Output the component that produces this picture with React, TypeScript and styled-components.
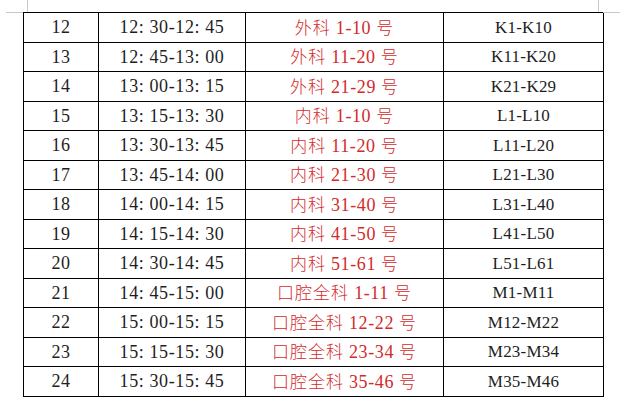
import React from 'react';
import styled, { createGlobalStyle } from 'styled-components';

const GlobalStyle = createGlobalStyle`
  html, body {
    margin: 0;
    padding: 0;
    background: #ffffff;
  }
`;

const Page = styled.div`
  position: relative;
  width: 629px;
  height: 412px;
  padding: 12px 0 0 23px;
  box-sizing: border-box;
  background: #ffffff;
`;

const CornerMark = styled.span<{ $side: 'left' | 'right' }>`
  position: absolute;
  top: 0;
  ${(p) => (p.$side === 'left' ? 'left: 6px;' : 'left: 598px;')}
  width: 22px;
  height: 13px;
  pointer-events: none;

  &::before {
    content: '';
    position: absolute;
    top: 0;
    ${(p) => (p.$side === 'left' ? 'right: 0;' : 'left: 0;')}
    width: 1px;
    height: 12px;
    background: #c8c8c8;
  }

  &::after {
    content: '';
    position: absolute;
    top: 12px;
    ${(p) => (p.$side === 'left' ? 'left: 0;' : 'right: 0;')}
    width: 17px;
    height: 1px;
    background: #c8c8c8;
  }
`;

const Table = styled.table`
  border-collapse: collapse;
  table-layout: fixed;
  width: 580px;
  font-family: 'Liberation Serif', 'Noto Sans CJK SC', serif;
  font-size: 18px;
`;

const Cell = styled.td<{ $red?: boolean; $code?: boolean }>`
  border: 1px solid #000000;
  height: 28.5px;
  padding: 0;
  text-align: center;
  vertical-align: middle;
  line-height: 1;
  letter-spacing: ${(p) => (p.$code ? '0.2px' : '0.6px')};
  font-size: ${(p) => (p.$code ? '17px' : '18px')};
  color: ${(p) => (p.$red ? '#d32a2a' : '#1e1e1e')};
`;

const Han = styled.span`
  font-family: 'Noto Sans CJK SC', serif;
  font-size: 17px;
  font-weight: 300;
  letter-spacing: 1px;
`;

type Row = {
  no: string;
  time: string;
  dept: string;
  range: string;
  code: string;
};

const rows: Row[] = [
  { no: '12', time: '12: 30-12: 45', dept: '外科', range: '1-10', code: 'K1-K10' },
  { no: '13', time: '12: 45-13: 00', dept: '外科', range: '11-20', code: 'K11-K20' },
  { no: '14', time: '13: 00-13: 15', dept: '外科', range: '21-29', code: 'K21-K29' },
  { no: '15', time: '13: 15-13: 30', dept: '内科', range: '1-10', code: 'L1-L10' },
  { no: '16', time: '13: 30-13: 45', dept: '内科', range: '11-20', code: 'L11-L20' },
  { no: '17', time: '13: 45-14: 00', dept: '内科', range: '21-30', code: 'L21-L30' },
  { no: '18', time: '14: 00-14: 15', dept: '内科', range: '31-40', code: 'L31-L40' },
  { no: '19', time: '14: 15-14: 30', dept: '内科', range: '41-50', code: 'L41-L50' },
  { no: '20', time: '14: 30-14: 45', dept: '内科', range: '51-61', code: 'L51-L61' },
  { no: '21', time: '14: 45-15: 00', dept: '口腔全科', range: '1-11', code: 'M1-M11' },
  { no: '22', time: '15: 00-15: 15', dept: '口腔全科', range: '12-22', code: 'M12-M22' },
  { no: '23', time: '15: 15-15: 30', dept: '口腔全科', range: '23-34', code: 'M23-M34' },
  { no: '24', time: '15: 30-15: 45', dept: '口腔全科', range: '35-46', code: 'M35-M46' },
];

const App: React.FC = () => {
  return (
    <>
      <GlobalStyle />
      <Page>
        <CornerMark $side="left" />
        <CornerMark $side="right" />
        <Table>
          <colgroup>
            <col style={{ width: 75 }} />
            <col style={{ width: 147 }} />
            <col style={{ width: 198 }} />
            <col style={{ width: 160 }} />
          </colgroup>
          <tbody>
            {rows.map((r) => (
              <tr key={r.no}>
                <Cell>{r.no}</Cell>
                <Cell>{r.time}</Cell>
                <Cell $red>
                  <Han>{r.dept}</Han> {r.range} <Han>号</Han>
                </Cell>
                <Cell $code>{r.code}</Cell>
              </tr>
            ))}
          </tbody>
        </Table>
      </Page>
    </>
  );
};

export default App;
